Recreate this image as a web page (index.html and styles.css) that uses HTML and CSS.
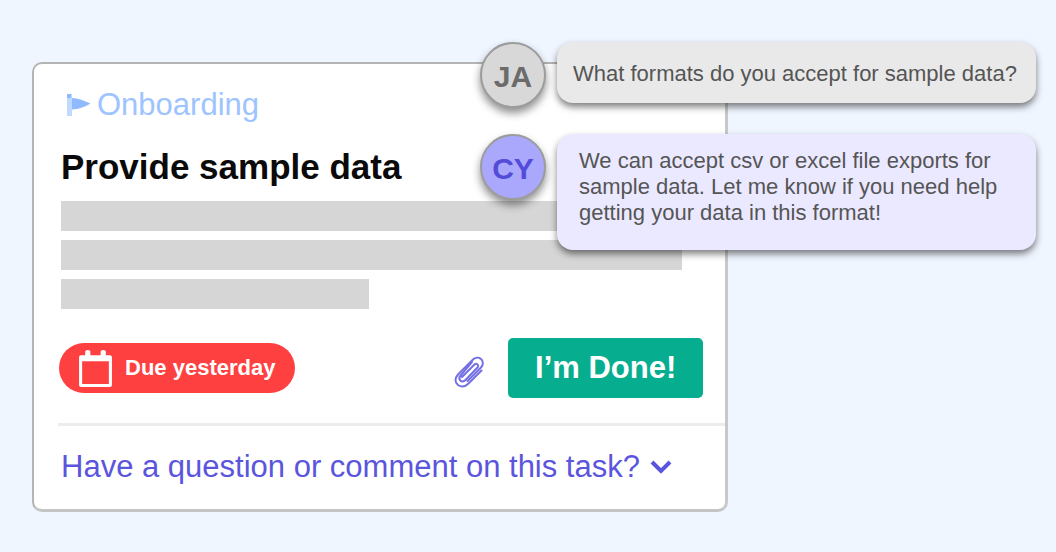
FILE: index.html
```html
<!DOCTYPE html>
<html lang="en">
<head>
    <meta charset="UTF-8">
    <meta name="viewport" content="width=device-width, initial-scale=1.0">
    <title>Provide sample data</title>
    <link rel="stylesheet" href="styles.css">
</head>
<body>
    <main class="scene">
        <article class="task-card">
            <div class="task-body">
                <div class="task-stage">
                    <svg class="flag-icon" viewBox="0 0 24 24" aria-hidden="true">
                        <path d="M0 1h5v22H0z" opacity="0.55"/>
                        <path d="M0 1h4v4H0z"/>
                        <path d="M5 5c6 0 12 2.500 18.500 5.500-6 3.500-12 6-18.500 6z"/>
                    </svg>
                    <span>Onboarding</span>
                </div>
                <h1 class="task-title">Provide sample data</h1>
                <div class="task-text">
                    <div class="text-line"></div>
                    <div class="text-line"></div>
                    <div class="text-line short"></div>
                </div>
                <div class="task-actions">
                    <div class="due-badge">
                        <svg class="calendar-icon" viewBox="0 0 32 36" aria-hidden="true">
                            <path d="M0 7q0-2 2-2h4V1.500q0-1.500 2.500-1.500T11 1.500V5h10V1.500Q21 0 23.500 0T26 1.500V5h4q2 0 2 2v27q0 2-2 2H2q-2 0-2-2zM3 11v22h26V11z" fill-rule="evenodd"/>
                        </svg>
                        <span>Due yesterday</span>
                    </div>
                    <button class="attach-button" type="button" aria-label="Attach file">
                        <svg class="clip-icon" viewBox="0 0 30 32" aria-hidden="true">
                            <path d="M8 21 20.500 8.500c2-2 5 1 3 3L11.500 24c-4 4-8-1-5-4.500L18 6"/>
                            <path d="M27.500 14.500 14.500 27.500c-3 3-7 4-10.500 1.500-3.500-3-3-7 0-10.500L18.500 4c2.500-2.500 6-3 8.500-1s2.500 5.500 0 8.500L13.500 25"/>
                        </svg>
                    </button>
                    <button class="done-button" type="button">I’m Done!</button>
                </div>
            </div>
            <div class="task-footer">
                <button class="comment-toggle" type="button">
                    <span>Have a question or comment on this task?</span>
                    <svg class="chevron-icon" viewBox="0 0 22 16" aria-hidden="true">
                        <path d="M2 3l9 9 9-9"/>
                    </svg>
                </button>
            </div>
        </article>

        <section class="chat">
            <div class="message">
                <div class="avatar">JA</div>
                <p class="bubble">What formats do you accept for sample data?</p>
            </div>
            <div class="message reply">
                <div class="avatar">CY</div>
                <p class="bubble">We can accept csv or excel file exports for sample data. Let me know if you need help getting your data in this format!</p>
            </div>
        </section>
    </main>
</body>
</html>
```
FILE: styles.css
```css
* {
    margin: 0;
    padding: 0;
    box-sizing: border-box;
}

body {
    font-family: "Liberation Sans", Arial, sans-serif;
    background: #f0f6ff;
    min-height: 100vh;
}

button {
    font-family: inherit;
    border: none;
    background: none;
    cursor: pointer;
}

.scene {
    position: relative;
    padding: 62px 0 40px 32px;
}

.task-card {
    width: 68%;
    background: #fff;
    border: 2px solid #b4b4b4;
    border-right: 3px solid #c8c8c8;
    border-bottom: 3px solid #c4c4c4;
    border-radius: 10px;
}

.task-body {
    padding: 23px 22px 25px 27px;
}

.task-stage {
    display: flex;
    align-items: center;
    gap: 6px;
    padding-left: 6px;
    font-size: 31px;
    line-height: 36px;
    color: #9dc4ff;
}

.flag-icon {
    width: 24px;
    height: 24px;
    fill: #8fbaff;
}

.task-title {
    margin-top: 24px;
    font-size: 35px;
    line-height: 40px;
    color: #0a0a0a;
}

.task-text {
    display: flex;
    flex-direction: column;
    gap: 9px;
    margin: 14px 21px 0 0;
}

.text-line {
    height: 30px;
    background: #d6d6d6;
}

.text-line.short {
    width: 308px;
}

.task-actions {
    display: flex;
    align-items: center;
    margin-top: 29px;
    margin-left: -2px;
}

.due-badge {
    display: flex;
    align-items: center;
    gap: 13px;
    height: 50px;
    padding: 0 20px;
    border-radius: 25px;
    background: #ff4040;
    color: #fff;
    font-size: 22px;
    font-weight: bold;
}

.calendar-icon {
    width: 33px;
    height: 37px;
    fill: #fff;
}

.attach-button {
    margin-left: auto;
    padding-top: 8px;
}

.clip-icon {
    display: block;
    width: 30px;
    height: 32px;
    fill: none;
    stroke: #7470e4;
    stroke-width: 2;
    stroke-linecap: round;
}

.done-button {
    height: 60px;
    margin-left: 24px;
    padding: 0 27px;
    border-radius: 5px;
    background: #07ad8f;
    color: #fff;
    font-size: 31px;
    font-weight: bold;
}

.task-footer {
    margin-left: 24px;
    border-top: 3px solid #ececec;
    padding: 23px 3px 24px;
}

.comment-toggle {
    display: flex;
    align-items: center;
    gap: 10px;
    font-size: 31px;
    line-height: 36px;
    color: #5b55dd;
}

.chevron-icon {
    width: 22px;
    height: 16px;
    fill: none;
    stroke: #5b55dd;
    stroke-width: 4;
}

/* Conversation floating over the corner of the card */
.chat {
    position: absolute;
    top: 42px;
    right: 20px;
    display: flex;
    flex-direction: column;
    gap: 31px;
    width: 556px;
}

.message {
    display: flex;
    align-items: flex-start;
    gap: 11px;
}

.avatar {
    flex: none;
    width: 66px;
    height: 66px;
    margin-bottom: -6px;
    border: 2px solid #9c9c9c;
    border-radius: 50%;
    background: #d8d8d8;
    box-shadow: 0 5px 8px rgba(0, 0, 0, 0.45);
    color: #6b6b6b;
    font-size: 30px;
    font-weight: bold;
    line-height: 66px;
    text-align: center;
}

.bubble {
    flex: 1;
    padding: 19px 12px 16px 16px;
    border-radius: 16px;
    background: #e9e9e9;
    box-shadow: 0 4px 7px rgba(0, 0, 0, 0.5);
    color: #555;
    font-size: 22px;
    line-height: 26px;
}

.reply .avatar {
    background: #aaa8fd;
    color: #524cd8;
}

.reply .bubble {
    padding: 14px 22px 24px;
    background: #ebe9ff;
}
```
